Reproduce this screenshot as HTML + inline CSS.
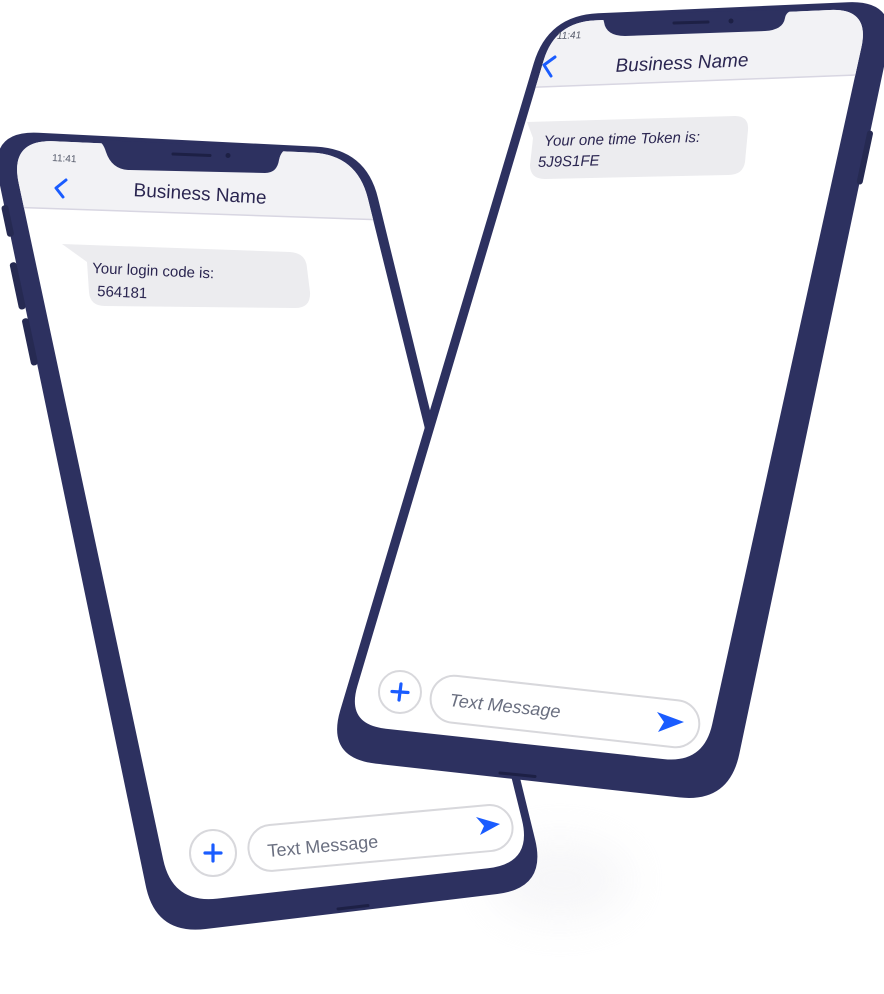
<!DOCTYPE html>
<html><head><meta charset="utf-8"><style>
html,body{margin:0;padding:0;background:#fff;width:884px;height:994px;overflow:hidden}
svg{display:block}
text{font-family:"Liberation Sans",sans-serif}
</style></head><body>
<svg width="884" height="994" viewBox="0 0 884 994" xmlns="http://www.w3.org/2000/svg">
<defs>
<filter id="blur" x="-50%" y="-50%" width="200%" height="200%"><feGaussianBlur stdDeviation="22"/></filter>
<clipPath id="scrL"><path d="M54.3,141.2 L312,152.6 Q357,154.6 367.8,198.3 L521.9,819.6 Q532.7,863.3 488,868.3 L217.3,898.6 Q172.6,903.6 163.2,859.6 L18.7,183.2 Q9.3,139.2 54.3,141.2 Z"/></clipPath>
<clipPath id="scrR"><path d="M595,20.4 L830,10 Q870,8.2 861.4,47.3 L712.2,724.3 Q703.6,763.4 663.8,759.1 L385.8,728.7 Q346,724.4 357.4,686 L543.6,60.6 Q555,22.2 595,20.4 Z"/></clipPath>
</defs>

<!-- shadow -->
<ellipse cx="560" cy="880" rx="70" ry="40" fill="#ececf0" filter="url(#blur)" opacity="0.45"/>

<!-- LEFT PHONE -->
<path d="M38.4,132.8 L316,146.6 Q366,149.1 377.9,197.7 L535.1,839.5 Q547,888 497.4,894 L205.6,929 Q156,935 145.8,886 L-1.3,179.3 Q-11.5,130.3 38.4,132.8 Z" fill="#2d3160"/>
<rect x="4" y="205" width="7" height="32" rx="3" fill="#262a52" transform="rotate(-12 7 220)"/>
<rect x="14" y="262" width="7" height="48" rx="3" fill="#262a52" transform="rotate(-12 17 285)"/>
<rect x="26" y="318" width="7" height="48" rx="3" fill="#262a52" transform="rotate(-12 29 340)"/>
<path d="M54.3,141.2 L312,152.6 Q357,154.6 367.8,198.3 L521.9,819.6 Q532.7,863.3 488,868.3 L217.3,898.6 Q172.6,903.6 163.2,859.6 L18.7,183.2 Q9.3,139.2 54.3,141.2 Z" fill="#ffffff"/>
<g clip-path="url(#scrL)">
<polygon points="0,0 450,0 450,222.2 0,206.8" fill="#f2f2f5"/>
<line x1="0" y1="206.8" x2="450" y2="222.2" stroke="#d8d6e2" stroke-width="1.5"/>
</g>
<path d="M97,140 Q103,142 106,152 Q112,170 130,170 L265,173 Q277,173 279,160 Q281,150 289,148 Z" fill="#2d3160"/>
<line x1="173" y1="154" x2="210" y2="155.5" stroke="#1d2045" stroke-width="3" stroke-linecap="round"/>
<circle cx="228" cy="155.5" r="2.5" fill="#1d2045"/>
<text x="52" y="161" font-size="10" fill="#555a6a" transform="rotate(3 52 161)">11:41</text>
<path d="M66,180 L56,188 L63,197" fill="none" stroke="#1a5cff" stroke-width="3" stroke-linecap="round" stroke-linejoin="round"/>
<text x="200" y="200" font-size="19" fill="#2a2550" text-anchor="middle" transform="rotate(3.3 200 195)">Business Name</text>
<path d="M62,244 L290,252 Q306,253 307,268 L310,292 Q311,308 295,308 L105,306 Q90,306 89,292 L87,262 Z" fill="#ececef"/>
<text x="92" y="273" font-size="15" fill="#2a2550" transform="rotate(2.5 92 273)">Your login code is:</text>
<text x="97" y="296" font-size="15" fill="#2a2550" transform="rotate(2.5 97 296)">564181</text>
<circle cx="213" cy="853" r="23" fill="#fff" stroke="#d8d8dc" stroke-width="2"/>
<path d="M213,845 L213,861 M205,853 L221,853" stroke="#1a5cff" stroke-width="3.2" stroke-linecap="round"/>
<rect x="248" y="815" width="265" height="46" rx="23" fill="#fff" stroke="#d8d8dc" stroke-width="2" transform="rotate(-5.2 380 838)"/>
<text x="268" y="857" font-size="18" fill="#6a6f80" transform="rotate(-5 268 857)">Text Message</text>
<path d="M476,817 L500,824 L480,835 L484,826 Z" fill="#1a5cff"/>
<line x1="338" y1="909" x2="368" y2="905.5" stroke="#1d2045" stroke-width="3" stroke-linecap="round"/>

<!-- RIGHT PHONE -->
<path d="M598,13.3 L848,2.2 Q898,0 887.7,49 L739.3,754 Q729,803 679.3,797.4 L375.7,763.6 Q326,758 340.3,710.1 L533.7,63.4 Q548,15.5 598,13.3 Z" fill="#2d3160"/>
<rect x="862" y="130" width="6" height="55" rx="3" fill="#262a52" transform="rotate(12 865 157)"/>
<path d="M595,20.4 L830,10 Q870,8.2 861.4,47.3 L712.2,724.3 Q703.6,763.4 663.8,759.1 L385.8,728.7 Q346,724.4 357.4,686 L543.6,60.6 Q555,22.2 595,20.4 Z" fill="#ffffff"/>
<g clip-path="url(#scrR)">
<polygon points="400,0 900,0 900,73.3 400,92.4" fill="#f2f2f5"/>
<line x1="400" y1="92.4" x2="900" y2="73.3" stroke="#d8d6e2" stroke-width="1.5"/>
</g>
<path d="M597,14 Q603,16 604,22 Q606,36 625,36 L765,31 Q783,30 785,18 Q786,12 793,10 Z" fill="#2d3160"/>
<line x1="674" y1="23" x2="708" y2="22" stroke="#1d2045" stroke-width="3" stroke-linecap="round"/>
<circle cx="731" cy="21" r="2.5" fill="#1d2045"/>
<text x="557" y="39" font-size="10" font-style="italic" fill="#555a6a" transform="rotate(-2 557 39)">11:41</text>
<path d="M555,57 L544,65 L551,76" fill="none" stroke="#1a5cff" stroke-width="3" stroke-linecap="round" stroke-linejoin="round"/>
<text x="682" y="69" font-size="19" font-style="italic" fill="#2a2550" text-anchor="middle" transform="rotate(-2.5 682 64)">Business Name</text>
<path d="M527,122 L735,116 Q749,116 748,130 L745,162 Q743,175 728,175 L545,179 Q530,179 530,165 L533,138 Z" fill="#ececef"/>
<text x="544" y="146" font-size="15" font-style="italic" fill="#2a2550" transform="rotate(-1.5 544 146)">Your one time Token is:</text>
<text x="538" y="167" font-size="15" font-style="italic" fill="#2a2550" transform="rotate(-1.5 538 167)">5J9S1FE</text>
<circle cx="400" cy="692" r="21" fill="#fff" stroke="#d8d8dc" stroke-width="2"/>
<path d="M401,684 L399,700 M392,691.5 L408,692.5" stroke="#1a5cff" stroke-width="3.2" stroke-linecap="round"/>
<rect x="430" y="688" width="270" height="47" rx="23.5" fill="#fff" stroke="#d8d8dc" stroke-width="2" transform="rotate(6.3 565 711)"/>
<text x="449" y="706" font-size="18" font-style="italic" fill="#6a6f80" transform="rotate(6 449 706)">Text Message</text>
<path d="M657,712 L684,722 L658,732 L664,722 Z" fill="#1a5cff"/>
<line x1="500" y1="773" x2="535" y2="776.5" stroke="#1d2045" stroke-width="3" stroke-linecap="round"/>
</svg>
</body></html>
